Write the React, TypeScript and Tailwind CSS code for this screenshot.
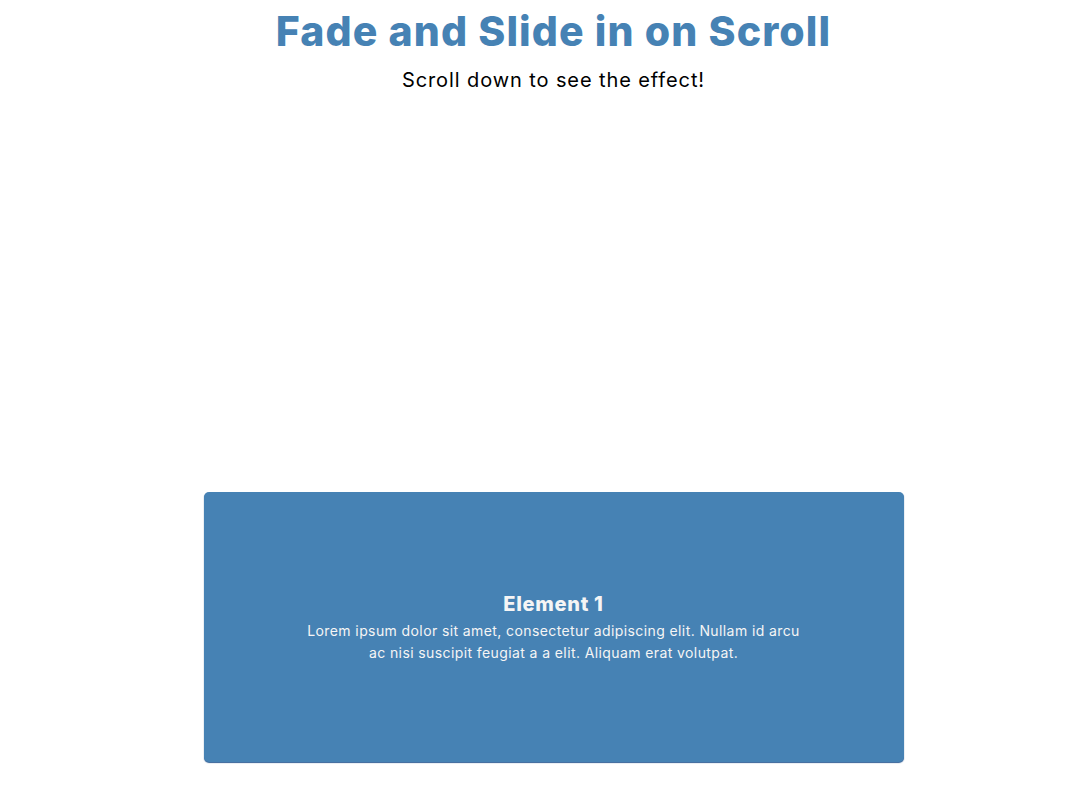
import React from 'react';

const font = { fontFamily: 'Inter, "Open Sans", sans-serif' };

export default function App() {
  return (
    <div className="min-h-[800px] bg-white pl-[28px]" style={font}>
      {/* Header */}
      <header className="flex flex-col items-center pt-[6px]">
        <h1 className="text-[41px] leading-[50px] font-extrabold text-[#4682b4] tracking-[1.1px]">
          Fade and Slide in on Scroll
        </h1>
        <p className="mt-[10px] text-[20px] leading-[28px] text-black tracking-[0.9px]">
          Scroll down to see the effect!
        </p>
      </header>

      {/* Animated element */}
      <section className="flex justify-center pt-[398px]">
        <div className="w-[700px] h-[270px] rounded-[5px] bg-[#4682b4] shadow-[0_1px_1px_rgba(30,80,140,0.9)] flex flex-col items-center justify-center px-[100px] text-center text-[#f5f5f5]">
          <h2 className="text-[20px] leading-[26px] font-extrabold tracking-[0.7px]">Element 1</h2>
          <p className="mt-[3px] text-[14px] leading-[22px] tracking-[0.4px]">
            Lorem ipsum dolor sit amet, consectetur adipiscing elit. Nullam id arcu ac nisi suscipit feugiat a a elit.
            Aliquam erat volutpat.
          </p>
        </div>
      </section>
    </div>
  );
}
